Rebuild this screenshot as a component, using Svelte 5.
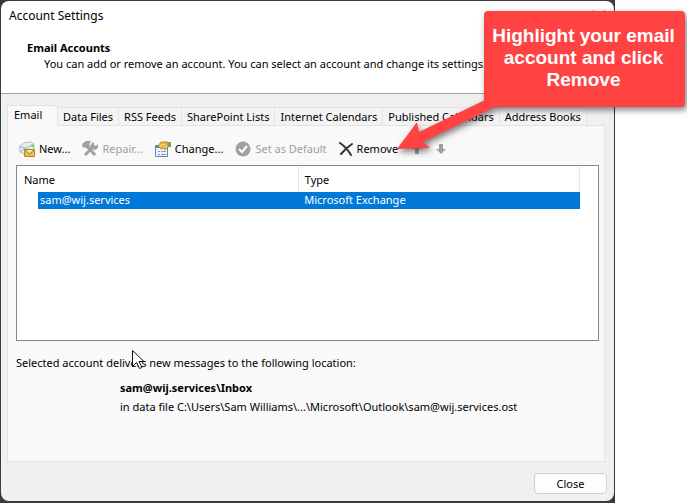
<script>
  const tabs = ['Email', 'Data Files', 'RSS Feeds', 'SharePoint Lists', 'Internet Calendars', 'Published Calendars', 'Address Books'];
  let active = $state('Email');
</script>

<main>
  <section class="dialog" aria-label="Account Settings">
    <header>
      <div class="titlebar">
        <h1>Account Settings</h1>
        <button class="dismiss" aria-label="Close window">
          <svg width="12" height="12" viewBox="0 0 12 12"><path d="M.5.5l11 11M11.500.5l-11 11" stroke="#111" fill="none" /></svg>
        </button>
      </div>
      <h2>Email Accounts</h2>
      <p>You can add or remove an account. You can select an account and change its settings.</p>
    </header>

    <div class="body">
      <div class="tabs" role="tablist">
        {#each tabs as tab}
          <button role="tab" aria-selected={tab === active} class:active={tab === active} onclick={() => (active = tab)}>{tab}</button>
        {/each}
      </div>

      <div class="panel" role="tabpanel">
        <div class="toolbar">
          <button>
            <svg width="16" height="16" viewBox="0 0 16 16">
              <path d="M.5 5 6 1.500 12 1l3 2v6l-8 5-6-3z" fill="#e6edf1" stroke="#b4c2cb" />
              <path d="M1 5.500l6 2 7-4M1 11l5-4" fill="none" stroke="#9bb0bc" />
              <path d="m12.500 3.500 2.500 1v2l-2.500-1z" fill="#5fd060" />
              <path d="M5.500 8.500h10v7h-10z" fill="#eebf45" stroke="#b08528" />
              <path d="m6 9 4.500 4L15 9" fill="#fbe79a" stroke="#94702a" />
            </svg>
            New...
          </button>
          <button disabled>
            <svg width="16" height="16" viewBox="0 0 16 16">
              <path d="m5 5 8 9M11 6l-8 8" stroke="#a0a0a0" stroke-width="3" />
              <path d="M0 3 4 0h5v1L7 3l1 2-3 3-2-2-2 1zM10 2l2-1v3l2 1 2-2v4l-3 2-3-1-2-3z" fill="#a0a0a0" />
            </svg>
            Repair...
          </button>
          <button>
            <svg width="16" height="16" viewBox="0 0 16 16">
              <path d="M.5 4.500h12v11H.5z" fill="#eef4fb" stroke="#6784ab" />
              <path d="M1 5h11v2H1z" fill="#5f7fae" />
              <path d="M3 10.500h2m1 0h5M3 13.500h2m1 0h5" stroke="#7d9ac4" />
              <path d="M13 1h3v5h-3z" fill="#62a574" />
              <path d="m3 5 3-4h7v5l-3 3-2-2-2 1z" fill="#e9b640" stroke="#b98d33" />
              <path d="m5 5 3-2 4 3" fill="none" stroke="#fbe296" />
            </svg>
            Change...
          </button>
          <button disabled>
            <svg width="16" height="16" viewBox="0 0 16 16"><circle cx="8" cy="8" r="7.500" fill="#a0a0a0" /><path d="m4 8 3 3 5-6" fill="none" stroke="#fff" stroke-width="2" /></svg>
            Set as Default
          </button>
          <button>
            <svg width="14" height="14" viewBox="0 0 14 14"><path d="M1 1q6 4 11 12M13 2Q7 6 2 12" fill="none" stroke="#333" stroke-width="2" stroke-linecap="round" /></svg>
            Remove
          </button>
          <div class="arrows">
            <button disabled aria-label="Move up"><svg width="10" height="10" viewBox="0 0 10 10"><path d="m5 0 5 5H7v5H3V5H0z" fill="#a0a0a0" /></svg></button>
            <button disabled aria-label="Move down"><svg width="10" height="10" viewBox="0 0 10 10"><path d="m5 10 5-5H7V0H3v5H0z" fill="#a0a0a0" /></svg></button>
          </div>
        </div>

        <div class="list">
          <table>
            <thead><tr><th class="name">Name</th><th>Type</th></tr></thead>
            <tbody><tr><td class="account"><span>sam@wij.services</span></td><td><span>Microsoft Exchange</span></td></tr></tbody>
          </table>
        </div>

        <p class="note">Selected account delivers new messages to the following location:</p>
        <div class="location">
          <strong>sam@wij.services\Inbox</strong>
          <span>in data file C:\Users\Sam Williams\...\Microsoft\Outlook\sam@wij.services.ost</span>
        </div>
      </div>

      <footer><button class="close">Close</button></footer>
    </div>
  </section>

  <svg class="cursor" width="13" height="20" viewBox="0 0 13 20"><path d="M.5.5v16l4-4 3 6 2.500-1-3-6H12z" fill="#fff" stroke="#111" /></svg>
  <aside class="callout">
    <svg width="100" height="56" viewBox="0 0 100 56"><path d="m0 49 20-27 2 10L88 0l14 5-76 37 7 6z" fill="#ff4343" /></svg>
    <p>Highlight your email account and click Remove</p>
  </aside>
</main>

<style>
  :global(body) { margin: 0; background: #fff; }
  * { box-sizing: border-box; }
  main { position: relative; font: 11px/16px "Noto Sans", "Open Sans", sans-serif; color: #000; }
  h1, h2, p { margin: 0; font-size: inherit; }
  button { margin: 0; padding: 0; border: 0; background: none; font: inherit; color: inherit; white-space: nowrap; }
  svg { display: block; flex: none; }
  .dialog { width: calc(100% - 72px); padding: 1px 1px 2px; background: #3b3b3d; }
  header { height: 93px; padding: 7px 9px 0 8px; background: #fff; border-bottom: 1px solid #a5a5a5; border-radius: 8px 8px 0 0; }
  .titlebar { display: flex; justify-content: space-between; }
  h1 { font-size: 12px; font-weight: 400; }
  .dismiss { align-self: center; }
  h2 { padding: 16px 0 0 18px; font-weight: 700; }
  header p { padding-left: 35px; }
  .body { padding: 11px 7px 7px 6px; background: #f0f0f0; border-radius: 0 0 8px 8px; }
  .tabs { display: flex; align-items: flex-end; }
  .tabs button { height: 18px; padding: 0 5px; border: 1px solid #e3e3e3; border-left: 0; border-bottom: 0; background: #f3f3f3; }
  .tabs button.active { min-width: 51px; height: 21px; margin-bottom: -1px; padding: 0 6px 3px; border-left: 1px solid #e3e3e3; background: #f9f9f9; text-align: left; position: relative; }
  .panel { margin-right: 2px; padding: 15px 5px 46px 8px; border: 1px solid #e3e3e3; background: #f9f9f9; }
  .toolbar { display: flex; align-items: center; gap: 12px; height: 16px; padding-left: 3px; }
  .toolbar button { display: flex; align-items: center; gap: 4px; }
  .toolbar button:disabled { color: #a0a0a0; }
  .arrows { display: flex; gap: 14px; padding-left: 2px; }
  .list { height: 176px; margin-top: 8px; padding: 1px 18px 0 0; border: 1px solid #828790; background: #fff; }
  table { width: 100%; table-layout: fixed; border-collapse: collapse; }
  th { height: 25px; padding: 0 6px; border-right: 1px solid #e5e5e5; font-weight: 400; text-align: left; }
  .name { width: 50%; padding-left: 7px; }
  td { padding: 0; color: #fff; }
  td span { display: block; height: 17px; padding-left: 6px; background: #0078d7; }
  .account { padding-left: 21px; }
  .account span { padding-left: 2px; }
  .note { margin-top: 14px; }
  .location { display: flex; flex-direction: column; gap: 3px; padding: 9px 0 0 104px; }
  footer { display: flex; justify-content: flex-end; padding-top: 11px; }
  .close { width: 73px; height: 21px; border: 1px solid #d0d0d0; border-radius: 4px; background: #fdfdfd; }
  .cursor { position: absolute; left: 132px; top: 350px; }
  .callout { position: absolute; right: 2px; top: 11px; width: 201px; filter: drop-shadow(2px 3px 3px rgb(0 0 0 / .5)); }
  .callout p { padding: 14px 7px 16px 5px; border-radius: 4px; background: #ff4343; color: #fff; text-align: center; font: bold 19px/22px "Liberation Sans", Arial, sans-serif; }
  .callout svg { position: absolute; right: 188px; top: 89px; }
</style>
